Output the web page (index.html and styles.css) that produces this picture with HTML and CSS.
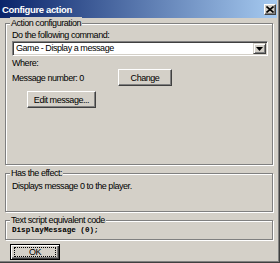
FILE: index.html
```html
<!DOCTYPE html>
<html>
<head>
<meta charset="utf-8">
<link rel="stylesheet" href="styles.css">
</head>
<body>
<div class="window">
  <div class="titlebar">
    <span class="title">Configure action</span>
    <span class="close"><svg width="8" height="7" viewBox="0 0 8 7"><path d="M0.5 0.5 L7.5 6.5 M7.5 0.5 L0.5 6.5" stroke="#000" stroke-width="1.6" fill="none"/></svg></span>
  </div>
  <div class="body">
    <div class="group g1">
      <span class="gtitle">Action configuration</span>
      <div class="lbl">Do the following command:</div>
      <div class="combo">
        <span class="combo-text">Game - Display a message</span>
        <span class="combo-btn"><svg width="7" height="4" viewBox="0 0 7 4"><path d="M0 0 H7 L3.5 4 Z" fill="#000"/></svg></span>
      </div>
      <div class="lbl where">Where:</div>
      <div class="msgrow">
        <span>Message number: 0</span>
        <button class="btn change">Change</button>
      </div>
      <button class="btn edit">Edit message...</button>
    </div>
    <div class="group g2">
      <span class="gtitle">Has the effect:</span>
      <div class="lbl">Displays message 0 to the player.</div>
    </div>
    <div class="group g3">
      <span class="gtitle">Text script equivalent code</span>
      <div class="code">DisplayMessage (0);</div>
    </div>
    <button class="btn ok"><span class="focus">OK</span></button>
  </div>
</div>
</body>
</html>
```
FILE: styles.css
```css
html, body {
  margin: 0;
  padding: 0;
}
body {
  width: 280px;
  height: 263px;
  overflow: hidden;
  background: #D4D0C8;
  font-family: "Liberation Sans", Arial, sans-serif;
  font-size: 9px;
  letter-spacing: -0.45px;
  color: #000;
}
.window {
  box-sizing: border-box;
  width: 280px;
  height: 263px;
  padding: 0 3px 3px 0;
  background: #D4D0C8;
  box-shadow: inset -1px -1px 0 #404040, inset -2px -2px 0 #808080;
  display: flex;
  flex-direction: column;
}
.titlebar {
  height: 18px;
  flex: none;
  background: linear-gradient(to right, #0A246A, #A6CAF0);
  display: flex;
  align-items: center;
  justify-content: space-between;
  padding: 0 1px 0 2px;
}
.title {
  color: #fff;
  font-weight: bold;
  font-size: 9.5px;
  letter-spacing: -0.35px;
}
.close {
  box-sizing: border-box;
  width: 12px;
  height: 11px;
  background: #D4D0C8;
  border: 1px solid;
  border-color: #fff #404040 #404040 #fff;
  box-shadow: inset -1px -1px 0 #808080;
  display: flex;
  align-items: center;
  justify-content: center;
  margin-top: 1px;
}
.body {
  flex: 1;
  padding: 5px 3px 0 5px;
  display: flex;
  flex-direction: column;
  align-items: stretch;
}
.group {
  position: relative;
  box-sizing: border-box;
  border: 1px solid #808080;
  box-shadow: 1px 1px 0 #fff, inset 1px 1px 0 #fff;
  margin-right: 1px;
}
.gtitle {
  position: absolute;
  top: -7px;
  left: 4px;
  padding: 0 1px;
  background: #D4D0C8;
  line-height: 12px;
  white-space: nowrap;
}
.lbl {
  line-height: 12px;
  white-space: nowrap;
}
.g1 {
  height: 142px;
  padding: 5px 4px 0 6px;
}
.combo {
  box-sizing: border-box;
  height: 15px;
  background: #fff;
  border: 1px solid;
  border-color: #808080 #fff #fff #808080;
  box-shadow: inset 1px 1px 0 #404040, inset -1px -1px 0 #D4D0C8;
  display: flex;
  align-items: center;
  justify-content: space-between;
  padding: 1px;
}
.combo-text {
  padding-left: 2px;
  line-height: 11px;
}
.combo-btn {
  box-sizing: border-box;
  width: 13px;
  height: 11px;
  background: #D4D0C8;
  border: 1px solid;
  border-color: #D4D0C8 #404040 #404040 #D4D0C8;
  box-shadow: inset 1px 1px 0 #fff, inset -1px -1px 0 #808080;
  display: flex;
  align-items: center;
  justify-content: center;
}
.where {
  margin-top: 2px;
  line-height: 11px;
}
.msgrow {
  display: grid;
  grid-template-columns: 106px 54px;
  align-items: center;
  height: 17px;
}
.btn {
  box-sizing: border-box;
  font-family: inherit;
  font-size: 9px;
  letter-spacing: -0.45px;
  color: #000;
  background: #D4D0C8;
  border: 1px solid;
  border-color: #fff #404040 #404040 #fff;
  box-shadow: inset -1px -1px 0 #808080;
  padding: 0;
  margin: 0;
  line-height: 12px;
  white-space: nowrap;
}
.change {
  height: 17px;
  width: 54px;
}
.edit {
  align-self: flex-start;
  display: block;
  width: 69px;
  height: 17px;
  margin: 5px 0 0 15px;
}
.g2 {
  height: 39px;
  margin-top: 8px;
  padding: 6px 4px 0 6px;
}
.g3 {
  height: 20px;
  margin-top: 8px;
  padding: 3px 4px 0 6px;
}
.code {
  font-family: "Liberation Mono", "Courier New", monospace;
  font-size: 7.6px;
  letter-spacing: 0;
  font-weight: bold;
  line-height: 12px;
  white-space: pre;
}
.ok {
  align-self: flex-start;
  width: 50px;
  height: 16px;
  margin: 4px 0 0 5px;
  border: 1px solid #000;
  box-shadow: inset 1px 1px 0 #fff, inset -1px -1px 0 #404040, inset -2px -2px 0 #808080;
  padding: 2px 3px;
  display: flex;
}
.focus {
  flex: 1;
  border: 1px dotted #000;
  line-height: 8px;
  display: flex;
  align-items: center;
  justify-content: center;
}
```
